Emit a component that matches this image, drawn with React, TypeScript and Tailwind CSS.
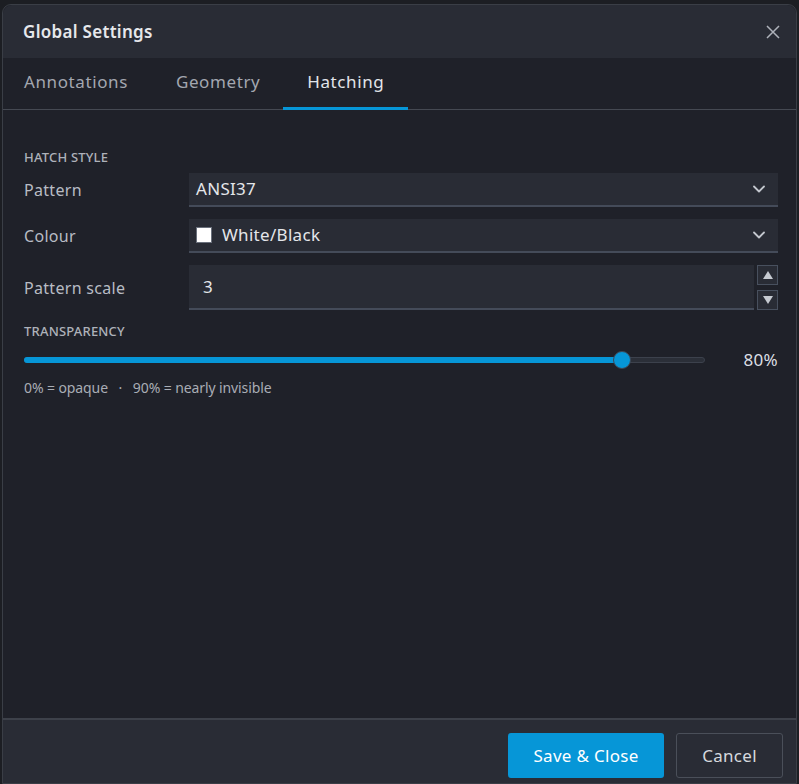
import { useState } from "react";

const TABS = ["Annotations", "Geometry", "Hatching"];

const Chevron = () => (
  <svg width="14" height="14" viewBox="0 0 14 14" className="shrink-0">
    <path
      d="M2 4.5 L7 9.5 L12 4.5"
      fill="none"
      stroke="#c3c7ce"
      strokeWidth="1.8"
      strokeLinecap="round"
      strokeLinejoin="round"
    />
  </svg>
);

const SelectBox = ({ children }: { children: React.ReactNode }) => (
  <div className="flex h-[34px] flex-1 items-center justify-between border-b-2 border-[#444b59] bg-[#292c35] pl-[7px] pr-[12px] text-[17px] tracking-[0.3px] text-[#e4e6ea]">
    <div className="flex items-center gap-[10px]">{children}</div>
    <Chevron />
  </div>
);

const App = () => {
  const [tab, setTab] = useState("Hatching");
  const [scale, setScale] = useState(3);
  const [transparency] = useState(80);
  const pct = transparency / 90;

  return (
    <div
      className="h-[784px] w-[799px] overflow-hidden bg-[#1c1e23] pl-[2px] pt-[4px]"
      style={{ fontFamily: '"Noto Sans", "Open Sans", sans-serif' }}
    >
      <div className="flex h-[780px] w-[795px] flex-col rounded-t-[9px] border border-[#3a3e46] bg-[#1f2129]">
        {/* header */}
        <div className="flex h-[53px] shrink-0 items-center justify-between rounded-t-[9px] bg-[#292c35] pl-[20px] pr-[16px]">
          <h1 className="text-[17px] font-semibold tracking-[0.3px] text-[#e6e8ec]">
            Global Settings
          </h1>
          <svg width="14" height="14" viewBox="0 0 14 14">
            <path
              d="M1 1 L13 13 M13 1 L1 13"
              stroke="#aeb2ba"
              strokeWidth="1.5"
            />
          </svg>
        </div>

        {/* tabs */}
        <div className="flex h-[52px] shrink-0 items-stretch border-b border-[#454952] pl-[2px]">
          {TABS.map((t) => (
            <button
              key={t}
              onClick={() => setTab(t)}
              className={`relative px-[19px] pb-[3px] text-[17px] tracking-[0.6px] ${
                t === tab ? "text-[#e2e5ea]" : "text-[#a3a7b0]"
              } ${t === "Geometry" ? "ml-[10px]" : ""} ${
                t === "Hatching" ? "ml-[4px] px-[24px]" : ""
              }`}
            >
              {t}
              {t === tab && (
                <span className="absolute bottom-[-1px] left-0 right-0 h-[3px] bg-[#0696d7]" />
              )}
            </button>
          ))}
        </div>

        {/* body */}
        <div className="flex flex-1 flex-col pl-[21px] pr-[18px] pt-[39px]">
          <p className="text-[13px] font-medium uppercase leading-[16px] tracking-[0.2px] text-[#aeb2ba]">
            Hatch style
          </p>

          <div className="mt-[8px] flex items-center">
            <span className="w-[165px] text-[16px] tracking-[0.3px] text-[#b8bcc4]">
              Pattern
            </span>
            <SelectBox>ANSI37</SelectBox>
          </div>

          <div className="mt-[12px] flex items-center">
            <span className="w-[165px] text-[16px] tracking-[0.3px] text-[#b8bcc4]">
              Colour
            </span>
            <SelectBox>
              <span className="h-[16px] w-[16px] border border-[#6a707c] bg-white" />
              <span>White/Black</span>
            </SelectBox>
          </div>

          <div className="mt-[12px] flex items-center">
            <span className="w-[165px] text-[16px] tracking-[0.3px] text-[#b8bcc4]">
              Pattern scale
            </span>
            <div className="flex h-[45px] flex-1 items-center border-b-2 border-[#444b59] bg-[#292c35] pl-[14px] text-[17px] text-[#e4e6ea]">
              {scale}
            </div>
            <div className="ml-[3px] flex h-[45px] flex-col justify-between">
              <button
                onClick={() => setScale((s) => s + 1)}
                className="flex h-[20px] w-[21px] items-center justify-center border border-[#48505e] bg-[#292c35]"
              >
                <svg width="10" height="8" viewBox="0 0 10 8">
                  <path d="M5 0 L10 8 L0 8 Z" fill="#c6cad1" />
                </svg>
              </button>
              <button
                onClick={() => setScale((s) => Math.max(0, s - 1))}
                className="flex h-[20px] w-[21px] items-center justify-center border border-[#48505e] bg-[#292c35]"
              >
                <svg width="10" height="8" viewBox="0 0 10 8">
                  <path d="M0 0 L10 0 L5 8 Z" fill="#c6cad1" />
                </svg>
              </button>
            </div>
          </div>

          <p className="mt-[13px] text-[13px] font-medium uppercase leading-[16px] tracking-[0.2px] text-[#aeb2ba]">
            Transparency
          </p>

          <div className="mt-[8px] flex items-center">
            <div className="relative h-[20px] w-[681px]">
              <div className="absolute left-0 right-0 top-[7px] h-[6px] rounded-full border border-[#3c414c] bg-[#2b2f38]" />
              <div
                className="absolute left-0 top-[7px] h-[6px] rounded-full bg-[#0696d7]"
                style={{ width: `${9 + (681 - 18) * pct}px` }}
              />
              <div
                className="absolute top-[1px] h-[18px] w-[18px] rounded-full border border-[#3f4654] bg-[#0696d7]"
                style={{ left: `${(681 - 18) * pct}px` }}
              />
            </div>
            <span className="ml-auto text-[17px] tracking-[0.3px] text-[#dcdfe4]">
              {transparency}%
            </span>
          </div>

          <p className="mt-[4px] text-[14px] tracking-[-0.1px] text-[#a9adb5]">
            0% = opaque&nbsp;&nbsp;&nbsp;·&nbsp;&nbsp;&nbsp;90% = nearly invisible
          </p>
        </div>

        {/* footer */}
        <div className="flex h-[65px] shrink-0 items-start justify-end gap-[12px] border-t-2 border-[#3d414a] bg-[#292c35] pr-[13px] pt-[13px]">
          <button className="h-[45px] w-[156px] rounded-[3px] bg-[#0696d7] text-[17px] tracking-[0.3px] text-white">
            Save &amp; Close
          </button>
          <button className="h-[45px] w-[107px] rounded-[3px] border border-[#4a4f59] text-[17px] tracking-[0.3px] text-[#d6d9de]">
            Cancel
          </button>
        </div>
      </div>
    </div>
  );
};

export default App;
